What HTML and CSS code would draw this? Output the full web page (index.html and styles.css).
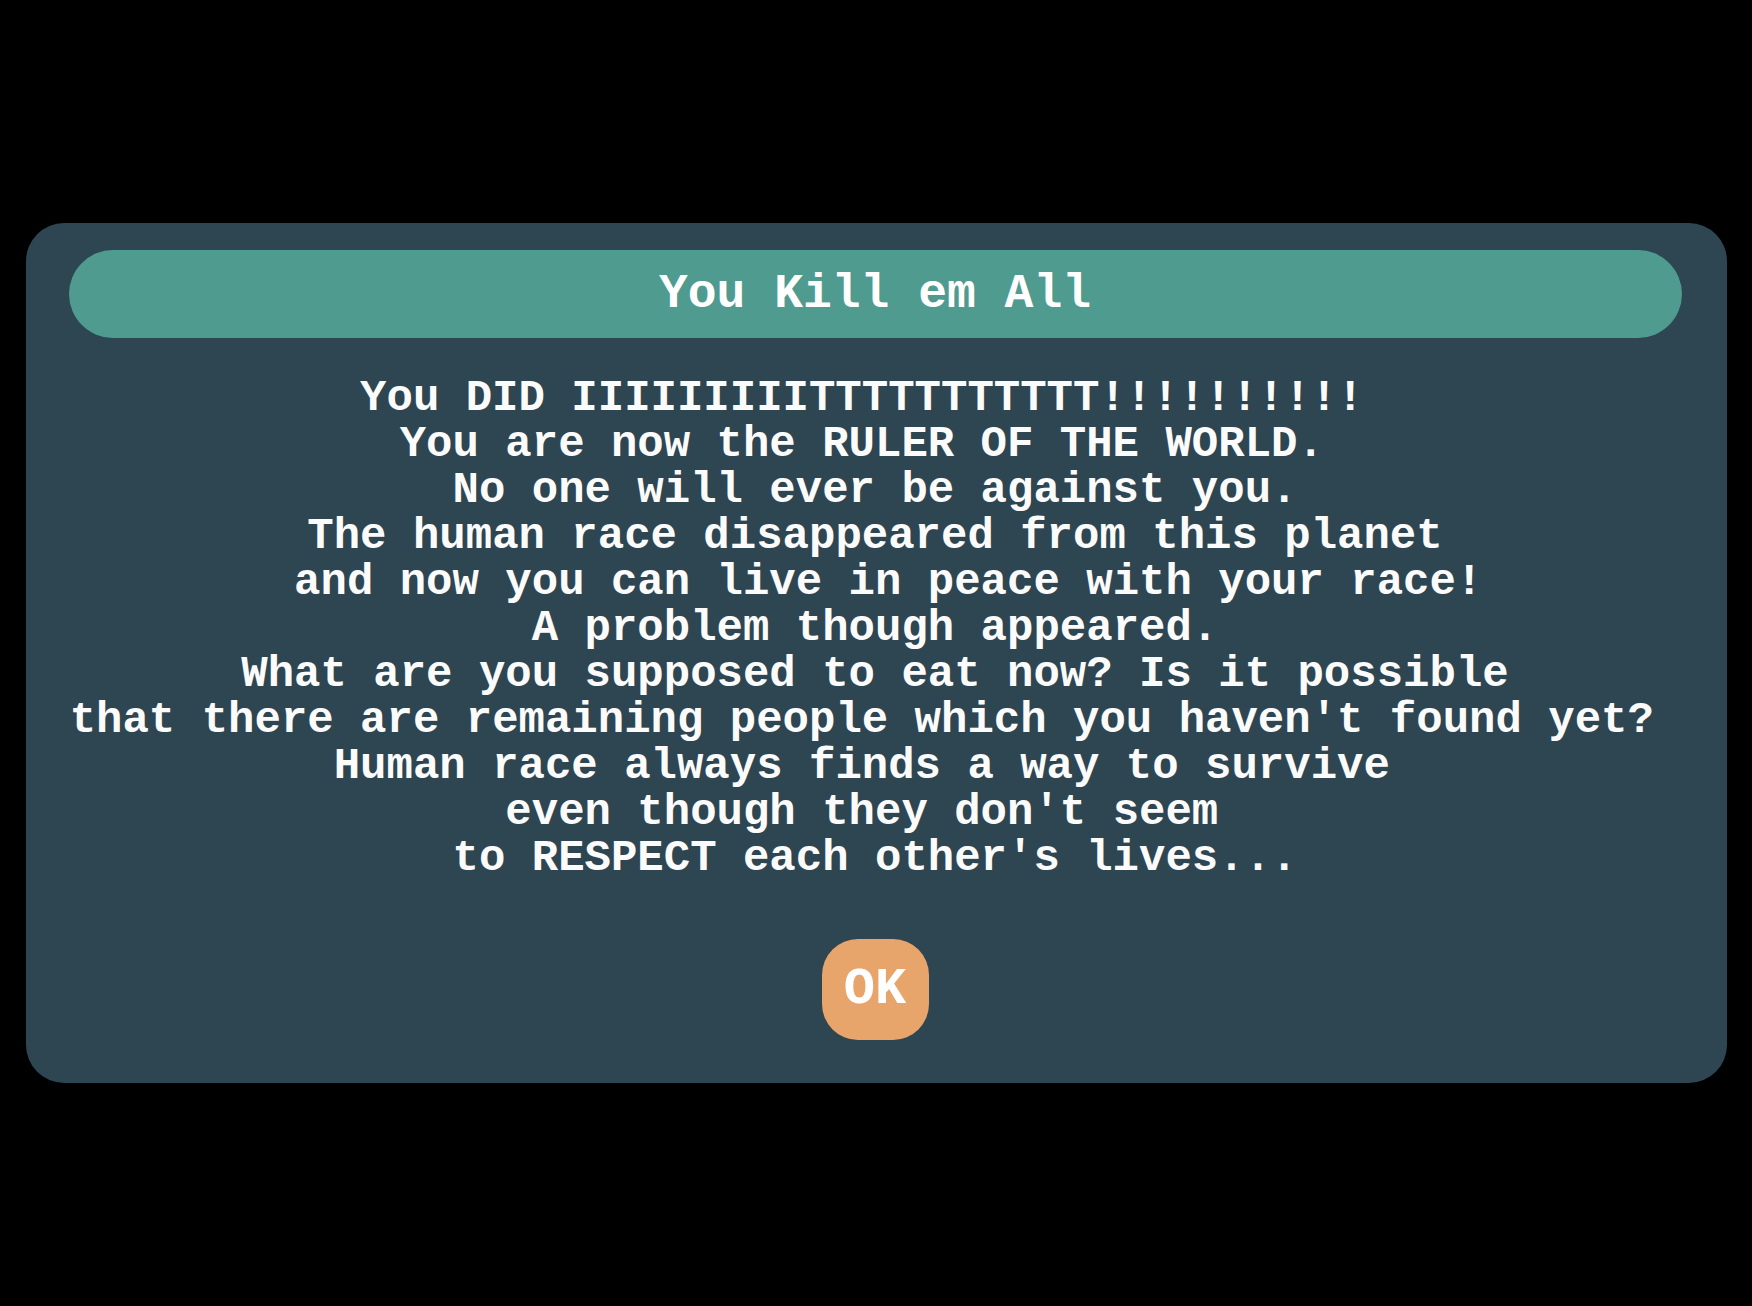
FILE: index.html
```html
<!DOCTYPE html>
<html lang="en">
<head>
<meta charset="utf-8">
<title>You Kill em All</title>
<link rel="stylesheet" href="styles.css">
</head>
<body>
<div class="dialog">
  <div class="dialog-title">You Kill em All</div>
  <div class="dialog-text">You DID IIIIIIIIITTTTTTTTTTT!!!!!!!!!! 
You are now the RULER OF THE WORLD. 
No one will ever be against you.
The human race disappeared from this planet
 and now you can live in peace with your race!
A problem though appeared.
What are you supposed to eat now? Is it possible
that there are remaining people which you haven't found yet? 
Human race always finds a way to survive 
even though they don't seem 
to RESPECT each other's lives...</div>
  <button class="ok-btn" type="button">OK</button>
</div>
</body>
</html>
```

FILE: styles.css
```css
html, body {
  margin: 0;
  padding: 0;
  background: #000;
}
body {
  min-height: 100vh;
  display: flex;
  align-items: center;
  justify-content: center;
  font-family: "Courier New", "Nimbus Mono PS", "Nimbus Mono L", "FreeMono", "Liberation Mono", monospace;
  font-weight: bold;
  color: #fff;
}
.dialog {
  box-sizing: border-box;
  width: 1701px;
  background: #2e4552;
  border-radius: 38px;
  padding: 27px 45px 43px 43px;
  display: flex;
  flex-direction: column;
  align-items: center;
}
.dialog-title {
  align-self: stretch;
  height: 88px;
  border-radius: 44px;
  background: #4f9b8f;
  display: flex;
  align-items: center;
  justify-content: center;
  font-size: 48px;
  color: #fff;
}
.dialog-text {
  margin-top: 37px;
  white-space: pre;
  text-align: center;
  font-size: 44px;
  line-height: 46px;
  color: #fbfbfb;
}
.ok-btn {
  margin-top: 58px;
  width: 107px;
  height: 101px;
  border: none;
  border-radius: 36px;
  background: #e8a56b;
  color: #fff;
  font-family: inherit;
  font-weight: bold;
  font-size: 52px;
  padding: 0;
  display: flex;
  align-items: center;
  justify-content: center;
}
```
